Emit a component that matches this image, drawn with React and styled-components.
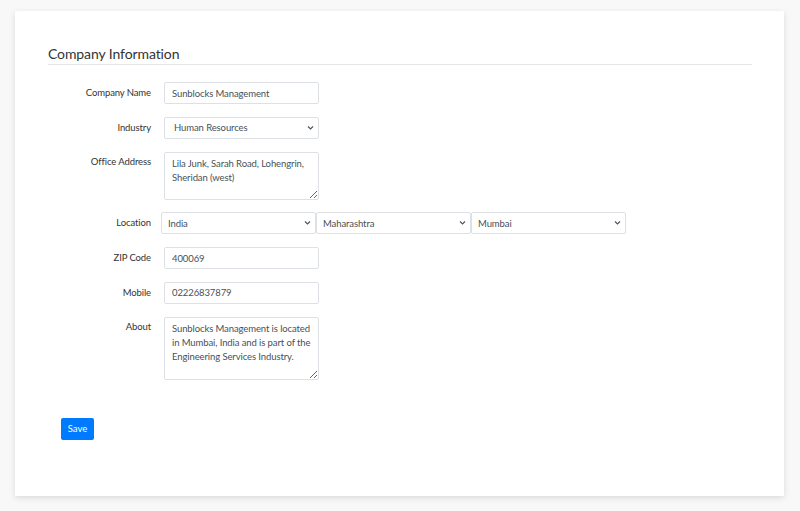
import React from 'react';
import styled, { createGlobalStyle } from 'styled-components';

const GlobalStyle = createGlobalStyle`
  html, body {
    margin: 0;
    padding: 0;
    background: #f8f8f8;
    font-family: Lato, "Open Sans", sans-serif;
  }
  * { box-sizing: border-box; }
`;

const Page = styled.div`
  padding: 11px 16px 15px 15px;
  min-height: 511px;
`;

const Card = styled.div`
  background: #fff;
  box-shadow: 0 2px 6px rgba(0, 0, 0, 0.12);
  padding: 34px 32px 56px 33px;
  height: 485px;
`;

const Heading = styled.h2`
  margin: 0;
  font-size: 14px;
  letter-spacing: -0.1px;
  line-height: 18px;
  font-weight: 400;
  color: #333;
  padding-bottom: 1px;
  border-bottom: 1px solid #e6e6e6;
`;

const Form = styled.form`
  display: flex;
  flex-direction: column;
  gap: 12.8px;
  margin-top: 17px;
`;

const Row = styled.div`
  display: grid;
  grid-template-columns: 103px auto;
  column-gap: 13px;
  align-items: start;
`;

const Label = styled.label`
  text-align: right;
  font-size: 9.5px;
  letter-spacing: -0.1px;
  color: #333;
  padding-top: ${p => (p.$tall ? '4px' : '5px')};
  line-height: 12px;
`;

const Input = styled.input`
  display: block;
  width: 155px;
  height: 22px;
  border: 1px solid #dde1e5;
  border-radius: 2px;
  padding: 0 7px;
  font-family: inherit;
  font-size: 9.5px;
  letter-spacing: -0.1px;
  color: #495057;
  outline: none;
`;

const TextArea = styled.textarea`
  width: 155px;
  height: ${p => p.$h}px;
  border: 1px solid #dde1e5;
  border-radius: 2px;
  padding: 4px 7px;
  font-family: inherit;
  font-size: 9.5px;
  letter-spacing: -0.1px;
  line-height: 14px;
  color: #495057;
  outline: none;
  resize: both;
  display: block;
`;

const SelectWrap = styled.div`
  position: relative;
  width: 155px;
`;

const Select = styled.select`
  appearance: none;
  display: block;
  width: 100%;
  height: 22px;
  border: 1px solid #dde1e5;
  border-radius: 2px;
  padding: 0 20px 0 ${p => (p.$pad ? p.$pad : 9)}px;
  font-family: inherit;
  font-size: 9.5px;
  letter-spacing: -0.1px;
  color: #495057;
  background: #fff;
  outline: none;
`;

const Chevron = styled.svg`
  position: absolute;
  right: 5px;
  top: 8px;
  width: 7px;
  height: 6px;
  pointer-events: none;
`;

const LocationGroup = styled.div`
  display: flex;
  margin-left: -3px;
`;

const Actions = styled.div`
  padding: 25px 0 0 13px;
`;

const Button = styled.button`
  display: block;
  background: #007bff;
  color: #fff;
  border: none;
  border-radius: 2px;
  height: 22px;
  width: 33px;
  padding: 0;
  font-family: inherit;
  font-size: 9.5px;
  cursor: pointer;
`;

function Dropdown({ value, pad }) {
  return (
    <SelectWrap>
      <Select defaultValue={value} $pad={pad}>
        <option>{value}</option>
      </Select>
      <Chevron viewBox="0 0 7 6">
        <path d="M1 1.5 L3.5 4 L6 1.5" fill="none" stroke="#555" strokeWidth="1.2" />
      </Chevron>
    </SelectWrap>
  );
}

export default function App() {
  return (
    <>
      <GlobalStyle />
      <Page>
        <Card>
          <Heading>Company Information</Heading>
          <Form onSubmit={e => e.preventDefault()}>
            <Row>
              <Label>Company Name</Label>
              <Input defaultValue="Sunblocks Management" />
            </Row>
            <Row>
              <Label>Industry</Label>
              <Dropdown value="Human Resources" />
            </Row>
            <Row>
              <Label $tall>Office Address</Label>
              <TextArea $h={48} defaultValue="Lila Junk, Sarah Road, Lohengrin, Sheridan (west)" />
            </Row>
            <Row>
              <Label>Location</Label>
              <LocationGroup>
                <Dropdown value="India" pad={6} />
                <Dropdown value="Maharashtra" pad={6} />
                <Dropdown value="Mumbai" pad={6} />
              </LocationGroup>
            </Row>
            <Row>
              <Label>ZIP Code</Label>
              <Input defaultValue="400069" />
            </Row>
            <Row>
              <Label>Mobile</Label>
              <Input defaultValue="02226837879" />
            </Row>
            <Row>
              <Label $tall>About</Label>
              <TextArea
                $h={63}
                defaultValue="Sunblocks Management is located in Mumbai, India and is part of the Engineering Services Industry."
              />
            </Row>
            <Actions>
              <Button type="submit">Save</Button>
            </Actions>
          </Form>
        </Card>
      </Page>
    </>
  );
}
